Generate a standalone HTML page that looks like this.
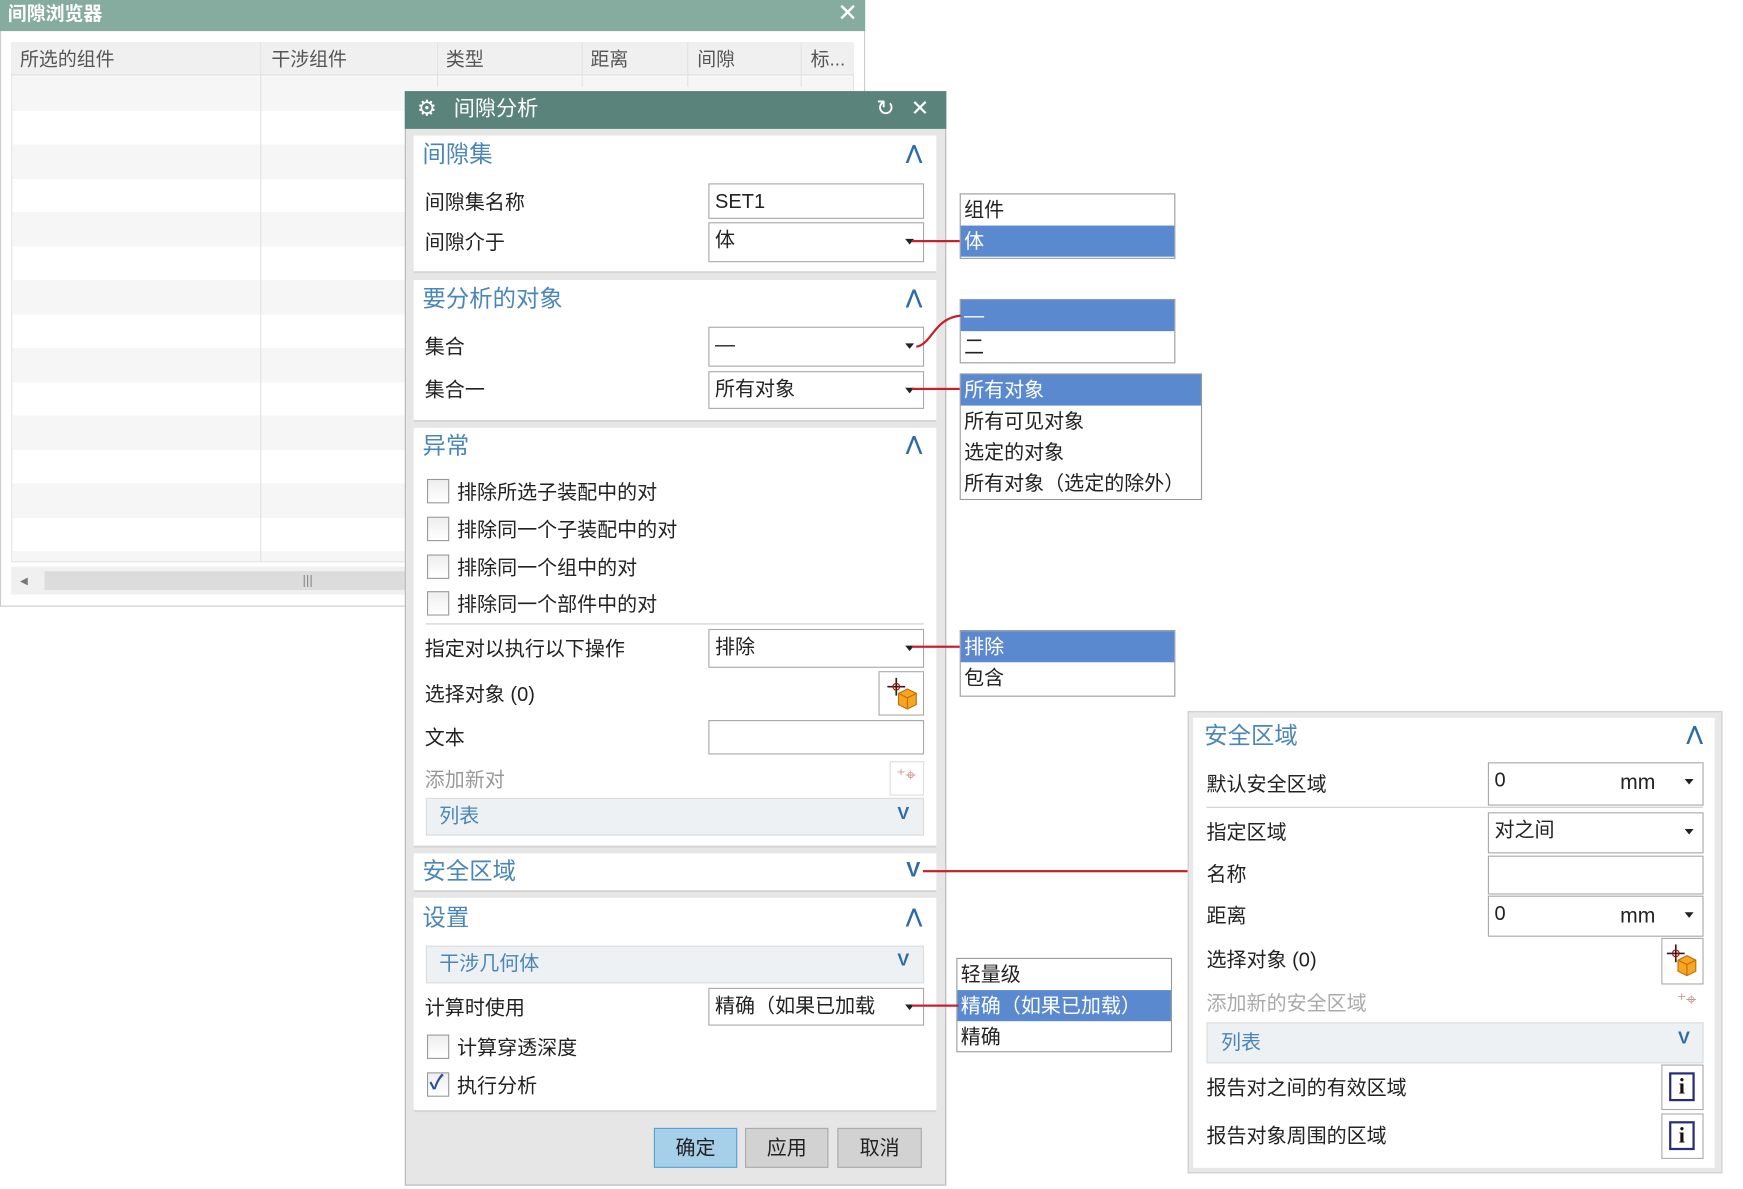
<!DOCTYPE html>
<html><head><meta charset="utf-8">
<style>
html,body{margin:0;padding:0;background:#fff;width:1743px;height:1189px;overflow:hidden}
#w{position:absolute;left:0;top:0;width:1568px;height:1070px;transform:scale(1.112,1.1112);transform-origin:0 0;font-family:"Liberation Sans","Noto Sans CJK SC",sans-serif;color:#222}
.a{position:absolute;box-sizing:border-box}
.t{position:absolute;font-size:18px;line-height:20px;white-space:nowrap}
.h{position:absolute;font-size:21px;color:#4a86b8;line-height:24px;white-space:nowrap}
.sec{position:absolute;background:#fff;box-sizing:border-box;border-bottom:2px solid #d6d6d6}
.in{position:absolute;background:#fff;border:1px solid #a8a8a8;box-sizing:border-box;font-size:18px;padding:3px 5px;line-height:24px;white-space:nowrap}
.dd:after{content:"";position:absolute;right:8px;top:14px;border-left:4px solid transparent;border-right:4px solid transparent;border-top:5px solid #222}
.cb{position:absolute;width:20px;height:22px;border:1px solid #999;background:linear-gradient(#eee,#fff);box-sizing:border-box}
.bar{position:absolute;background:#eef1f3;border:1px solid #d8dcdf;box-sizing:border-box;color:#4a86b8;font-size:18px;line-height:30px;padding-left:11px}
.up{position:absolute;font-size:17px;color:#2e6ca8;font-weight:bold}
.lst{position:absolute;background:#fff;border:1px solid #9a9a9a;box-sizing:border-box}
.lst div{height:28px;line-height:28px;font-size:18px;padding-left:3px;white-space:nowrap}
.sel{background:#5b89cf;color:#fff}
.rl{position:absolute;height:2px;background:#c8202a}
.ib{position:absolute;border:1px solid #aaa;background:#fff;box-sizing:border-box}
</style></head><body><div id="w">

<div class="a" style="left:0;top:0;width:778px;height:546px;background:#fff;border:1px solid #ccc"></div>
<div class="a" style="left:0;top:0;width:778px;height:28px;background:#86ab9f"></div>
<div class="t" style="left:7px;top:3px;color:#fff;font-size:17px;font-weight:bold">间隙浏览器</div>
<div class="t" style="left:753px;top:2px;color:#fff;font-size:22px">✕</div>
<div class="a" style="left:10px;top:38px;width:758px;height:468px;background:repeating-linear-gradient(#fff 0,#fff 30px,#f6f6f6 30px,#f6f6f6 61px);border:1px solid #e4e4e4"></div>
<div class="a" style="left:10px;top:38px;width:758px;height:30px;background:#f0f0f0;border-bottom:1px solid #ddd"></div>
<div class="a" style="left:234px;top:38px;width:1px;height:468px;background:#e2e2e2"></div>
<div class="a" style="left:393px;top:38px;width:1px;height:40px;background:#e2e2e2"></div>
<div class="a" style="left:523px;top:38px;width:1px;height:40px;background:#e2e2e2"></div>
<div class="a" style="left:618px;top:38px;width:1px;height:40px;background:#e2e2e2"></div>
<div class="a" style="left:720px;top:38px;width:1px;height:40px;background:#e2e2e2"></div>
<div class="t" style="left:18px;top:44px;color:#555;font-size:17px">所选的组件</div>
<div class="t" style="left:244px;top:44px;color:#555;font-size:17px">干涉组件</div>
<div class="t" style="left:401px;top:44px;color:#555;font-size:17px">类型</div>
<div class="t" style="left:531px;top:44px;color:#555;font-size:17px">距离</div>
<div class="t" style="left:627px;top:44px;color:#555;font-size:17px">间隙</div>
<div class="t" style="left:729px;top:44px;color:#555;font-size:17px">标...</div>
<div class="a" style="left:10px;top:510px;width:360px;height:25px;background:#f0f0f0"></div>
<div class="a" style="left:40px;top:514px;width:330px;height:17px;background:#dcdcdc"></div>
<div class="t" style="left:18px;top:512px;color:#777;font-size:14px">◂</div>
<div class="t" style="left:272px;top:512px;color:#888;font-size:12px">|||</div>

<div class="a" style="left:364px;top:82px;width:487px;height:985px;background:#e6e6e6;border:1px solid #b8b8b8"></div>
<div class="a" style="left:364px;top:82px;width:487px;height:34px;background:#5a847b"></div>
<div class="t" style="left:375px;top:88px;color:#fff;font-size:20px">⚙</div>
<div class="t" style="left:408px;top:89px;color:#fff;font-size:19px">间隙分析</div>
<div class="t" style="left:788px;top:88px;color:#fff;font-size:20px">↻</div>
<div class="t" style="left:819px;top:88px;color:#fff;font-size:20px">✕</div>

<div class="sec" style="left:372px;top:122px;width:470px;height:124px"></div>
<div class="h" style="left:380px;top:128px">间隙集</div><div class="up" style="left:815px;top:128px">⋀</div>
<div class="t" style="left:382px;top:172px">间隙集名称</div>
<div class="in" style="left:637px;top:165px;width:194px;height:32px">SET1</div>
<div class="t" style="left:382px;top:208px">间隙介于</div>
<div class="in dd" style="left:637px;top:200px;width:194px;height:36px">体</div>

<div class="sec" style="left:372px;top:252px;width:470px;height:128px"></div>
<div class="h" style="left:380px;top:258px">要分析的对象</div><div class="up" style="left:815px;top:258px">⋀</div>
<div class="t" style="left:382px;top:302px">集合</div>
<div class="in dd" style="left:637px;top:294px;width:194px;height:36px">—</div>
<div class="t" style="left:382px;top:341px">集合一</div>
<div class="in dd" style="left:637px;top:334px;width:194px;height:34px">所有对象</div>

<div class="sec" style="left:372px;top:385px;width:470px;height:378px"></div>
<div class="h" style="left:380px;top:390px">异常</div><div class="up" style="left:815px;top:390px">⋀</div>
<div class="cb" style="left:384px;top:431px"></div><div class="t" style="left:411px;top:433px">排除所选子装配中的对</div>
<div class="cb" style="left:384px;top:465px"></div><div class="t" style="left:411px;top:467px">排除同一个子装配中的对</div>
<div class="cb" style="left:384px;top:499px"></div><div class="t" style="left:411px;top:501px">排除同一个组中的对</div>
<div class="cb" style="left:384px;top:532px"></div><div class="t" style="left:411px;top:534px">排除同一个部件中的对</div>
<div class="a" style="left:383px;top:561px;width:448px;height:1px;background:#ccc"></div>
<div class="t" style="left:382px;top:574px">指定对以执行以下操作</div>
<div class="in dd" style="left:637px;top:566px;width:194px;height:35px">排除</div>
<div class="t" style="left:382px;top:615px">选择对象 (0)</div>
<div class="ib" style="left:790px;top:604px;width:41px;height:40px"></div>
<svg class="a" style="left:796px;top:608px" width="32" height="32" viewBox="0 0 32 32"><path d="M12 16l8-4 8 4v10l-8 4-8-4z" fill="#f5a623" stroke="#c86a00"/><path d="M12 16l8 4 8-4M20 20v10" stroke="#c86a00" fill="none"/><path d="M10 2v16M2 10h16" stroke="#222" stroke-width="1.5"/><circle cx="10" cy="10" r="3" fill="none" stroke="#c00"/></svg>
<div class="t" style="left:382px;top:654px">文本</div>
<div class="in" style="left:637px;top:648px;width:194px;height:31px"></div>
<div class="t" style="left:382px;top:692px;color:#999">添加新对</div>
<div class="ib" style="left:800px;top:685px;width:31px;height:31px;border-color:#ddd"></div>
<div class="t" style="left:806px;top:689px;color:#c99;font-size:16px">⁺⌖</div>
<div class="bar" style="left:383px;top:718px;width:448px;height:34px">列表</div>
<div class="up" style="left:807px;top:724px;font-size:16px">V</div>

<div class="sec" style="left:372px;top:768px;width:470px;height:35px"></div>
<div class="h" style="left:380px;top:773px">安全区域</div><div class="up" style="left:815px;top:773px;font-size:19px">V</div>

<div class="sec" style="left:372px;top:808px;width:470px;height:193px"></div>
<div class="h" style="left:380px;top:815px">设置</div><div class="up" style="left:815px;top:815px">⋀</div>
<div class="bar" style="left:383px;top:851px;width:448px;height:34px">干涉几何体</div>
<div class="up" style="left:807px;top:856px;font-size:16px">V</div>
<div class="t" style="left:382px;top:897px">计算时使用</div>
<div class="in dd" style="left:637px;top:889px;width:194px;height:34px">精确（如果已加载</div>
<div class="cb" style="left:384px;top:931px"></div><div class="t" style="left:411px;top:933px">计算穿透深度</div>
<div class="cb" style="left:384px;top:965px"></div><div class="t" style="left:386px;top:964px;color:#2a4f9a;font-weight:bold">✓</div><div class="t" style="left:411px;top:967px">执行分析</div>

<div class="a" style="left:588px;top:1015px;width:75px;height:36px;background:#a6d0ea;border:1px solid #5aa0d0;font-size:18px;text-align:center;line-height:34px">确定</div>
<div class="a" style="left:670px;top:1015px;width:75px;height:36px;background:#d2d2d2;border:1px solid #aaa;font-size:18px;text-align:center;line-height:34px">应用</div>
<div class="a" style="left:753px;top:1015px;width:76px;height:36px;background:#d2d2d2;border:1px solid #aaa;font-size:18px;text-align:center;line-height:34px">取消</div>

<div class="lst" style="left:863px;top:174px;width:194px;height:59px"><div>组件</div><div class="sel">体</div></div>
<div class="rl" style="left:820px;top:216px;width:43px"></div>
<div class="lst" style="left:863px;top:269px;width:194px;height:58px"><div class="sel">—</div><div>二</div></div>
<svg class="a" style="left:820px;top:280px" width="45" height="36"><path d="M4 32 C18 30 20 6 44 4" stroke="#c8202a" stroke-width="2" fill="none"/></svg>
<div class="lst" style="left:863px;top:336px;width:218px;height:114px"><div class="sel">所有对象</div><div>所有可见对象</div><div>选定的对象</div><div>所有对象（选定的除外）</div></div>
<div class="rl" style="left:820px;top:349px;width:43px"></div>
<div class="lst" style="left:863px;top:567px;width:194px;height:60px"><div class="sel">排除</div><div>包含</div></div>
<div class="rl" style="left:820px;top:581px;width:43px"></div>
<div class="lst" style="left:860px;top:862px;width:194px;height:85px"><div>轻量级</div><div class="sel">精确（如果已加载）</div><div>精确</div></div>
<div class="rl" style="left:820px;top:904px;width:42px"></div>
<div class="rl" style="left:830px;top:783px;width:238px"></div>

<div class="a" style="left:1068px;top:640px;width:481px;height:416px;background:#e8e8e8;border:1px solid #ccc"></div>
<div class="a" style="left:1073px;top:646px;width:469px;height:405px;background:#fff"></div>
<div class="h" style="left:1083px;top:651px">安全区域</div><div class="up" style="left:1517px;top:651px">⋀</div>
<div class="t" style="left:1085px;top:696px">默认安全区域</div>
<div class="in dd" style="left:1338px;top:686px;width:194px;height:39px">0<span style="position:absolute;left:118px;top:6px;font-size:19px">mm</span></div>
<div class="a" style="left:1085px;top:726px;width:446px;height:1px;background:#ccc"></div>
<div class="t" style="left:1085px;top:739px">指定区域</div>
<div class="in dd" style="left:1338px;top:731px;width:194px;height:37px">对之间</div>
<div class="t" style="left:1085px;top:777px">名称</div>
<div class="in" style="left:1338px;top:770px;width:194px;height:35px"></div>
<div class="t" style="left:1085px;top:814px">距离</div>
<div class="in dd" style="left:1338px;top:806px;width:194px;height:37px">0<span style="position:absolute;left:118px;top:6px;font-size:19px">mm</span></div>
<div class="t" style="left:1085px;top:854px">选择对象 (0)</div>
<div class="ib" style="left:1494px;top:844px;width:38px;height:42px"></div>
<svg class="a" style="left:1497px;top:848px" width="32" height="32" viewBox="0 0 32 32"><path d="M12 16l8-4 8 4v10l-8 4-8-4z" fill="#f5a623" stroke="#c86a00"/><path d="M12 16l8 4 8-4M20 20v10" stroke="#c86a00" fill="none"/><path d="M10 2v16M2 10h16" stroke="#222" stroke-width="1.5"/><circle cx="10" cy="10" r="3" fill="none" stroke="#c00"/></svg>
<div class="t" style="left:1085px;top:893px;color:#aaa">添加新的安全区域</div>
<div class="t" style="left:1508px;top:891px;color:#c99;font-size:16px">⁺⌖</div>
<div class="bar" style="left:1085px;top:920px;width:447px;height:37px;line-height:34px;padding-left:12px">列表</div>
<div class="up" style="left:1509px;top:926px;font-size:16px">V</div>
<div class="t" style="left:1085px;top:969px">报告对之间的有效区域</div>
<div class="ib" style="left:1494px;top:958px;width:38px;height:41px"><div style="position:absolute;left:6px;top:6px;width:23px;height:26px;border:2px solid #2a2a7a;box-sizing:border-box;font:bold 20px 'Liberation Serif',serif;text-align:center;line-height:22px;color:#111">i</div></div>
<div class="t" style="left:1085px;top:1012px">报告对象周围的区域</div>
<div class="ib" style="left:1494px;top:1002px;width:38px;height:41px"><div style="position:absolute;left:6px;top:6px;width:23px;height:26px;border:2px solid #2a2a7a;box-sizing:border-box;font:bold 20px 'Liberation Serif',serif;text-align:center;line-height:22px;color:#111">i</div></div>

</div></body></html>
